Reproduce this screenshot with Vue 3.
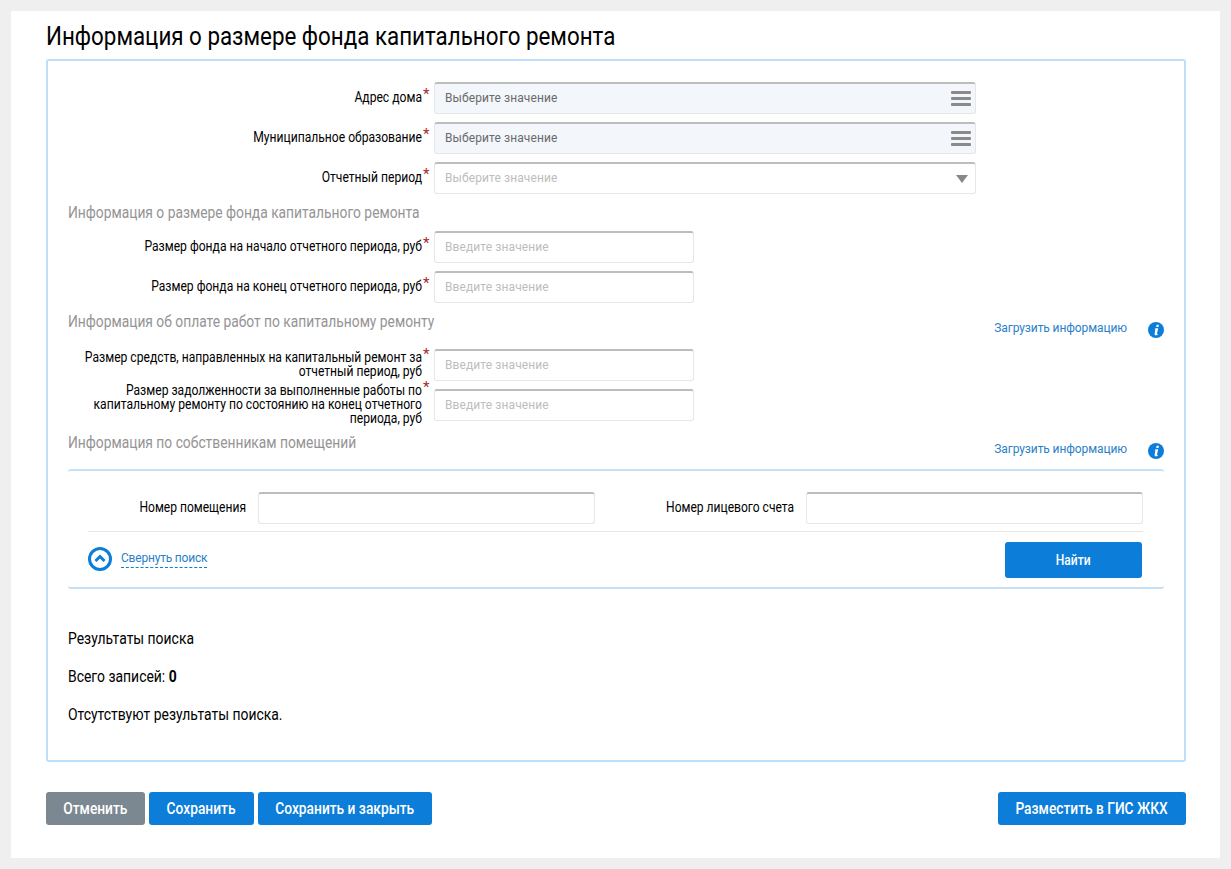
<template>
  <div class="page">
    <h1 class="title">Информация о размере фонда капитального ремонта</h1>

    <div class="box">
      <!-- Основные поля -->
      <div class="row" v-for="f in mainFields" :key="f.label">
        <div class="lbl-wrap"><label class="lbl">{{ f.label }}</label><span class="req">*</span></div>
        <div class="ctl wide" :class="{ picked: f.type === 'list' }">
          <span class="ctl-text" :class="{ dim: f.type !== 'list' }">Выберите значение</span>
          <svg v-if="f.type === 'list'" class="ico-list" width="20" height="15" viewBox="0 0 20 15">
            <rect y="0" width="20" height="3" rx="1" />
            <rect y="6" width="20" height="3" rx="1" />
            <rect y="12" width="20" height="3" rx="1" />
          </svg>
          <svg v-else class="ico-drop" width="12" height="8" viewBox="0 0 12 8"><path d="M0 0h12L6 8z" /></svg>
        </div>
      </div>

      <div class="section first"><h3>Информация о размере фонда капитального ремонта</h3></div>
      <div class="row" v-for="l in fundFields" :key="l">
        <div class="lbl-wrap"><label class="lbl">{{ l }}</label><span class="req">*</span></div>
        <input class="inp" placeholder="Введите значение" />
      </div>

      <div class="section second">
        <h3>Информация об оплате работ по капитальному ремонту</h3>
        <div class="load"><a>Загрузить информацию</a><svg class="info" width="16" height="16" viewBox="0 0 16 16"><circle cx="8" cy="8" r="8" /><path d="M8.6 2.8h2.3l-.4 2.1H8.2zM7.6 6.2h2.6L9 11.4c-.1.5.1.6.8.4l-.2 1.1c-1.6.7-3.3.5-3-1.2l.8-4.5h-1z" fill="#fff" /></svg></div>
      </div>
      <div class="row" v-for="l in payFields" :key="l">
        <div class="lbl-wrap"><label class="lbl">{{ l }}</label><span class="req">*</span></div>
        <input class="inp" placeholder="Введите значение" />
      </div>

      <div class="section third">
        <h3>Информация по собственникам помещений</h3>
        <div class="load"><a>Загрузить информацию</a><svg class="info" width="16" height="16" viewBox="0 0 16 16"><circle cx="8" cy="8" r="8" /><path d="M8.6 2.8h2.3l-.4 2.1H8.2zM7.6 6.2h2.6L9 11.4c-.1.5.1.6.8.4l-.2 1.1c-1.6.7-3.3.5-3-1.2l.8-4.5h-1z" fill="#fff" /></svg></div>
      </div>

      <!-- Блок поиска -->
      <div class="search">
        <div class="search-fields">
          <div class="s-lbl"><label>Номер помещения</label></div>
          <input class="inp s-inp" />
          <div class="s-lbl second-lbl"><label>Номер лицевого счета</label></div>
          <input class="inp s-inp" />
        </div>
        <div class="search-foot">
          <div class="collapse">
            <svg width="24" height="24" viewBox="0 0 24 24" fill="none" stroke="#0c7dd9">
              <circle cx="12" cy="12" r="10.5" stroke-width="3" />
              <path d="M7.5 14l4.5-4.5 4.5 4.5" stroke-width="3" />
            </svg>
            <a class="dashed">Свернуть поиск</a>
          </div>
          <button class="btn find"><span>Найти</span></button>
        </div>
      </div>

      <div class="results">
        <p>Результаты поиска</p>
        <p>Всего записей: <b>0</b></p>
        <p>Отсутствуют результаты поиска.</p>
      </div>
    </div>

    <div class="actions">
      <button class="btn gray w-cancel"><span>Отменить</span></button>
      <button class="btn w-save"><span>Сохранить</span></button>
      <button class="btn w-close"><span>Сохранить и закрыть</span></button>
      <button class="btn w-place"><span>Разместить в ГИС ЖКХ</span></button>
    </div>
  </div>
</template>

<script setup>
const mainFields = [
  { label: 'Адрес дома', type: 'list' },
  { label: 'Муниципальное образование', type: 'list' },
  { label: 'Отчетный период', type: 'drop' },
]
const fundFields = [
  'Размер фонда на начало отчетного периода, руб',
  'Размер фонда на конец отчетного периода, руб',
]
const payFields = [
  'Размер средств, направленных на капитальный ремонт за отчетный период, руб',
  'Размер задолженности за выполненные работы по капитальному ремонту по состоянию на конец отчетного периода, руб',
]
</script>

<style>
html, body {
  background: #efefef;
}
</style>

<style scoped>
/* Roboto Condensed is not installed, so the narrow text is Roboto squeezed with scaleX */
.page {
  box-sizing: border-box;
  width: 1209px;
  height: 847px;
  margin: 11px 0 0 11px;
  padding: 0 34px 0 35px;
  background: #fff;
  font-family: Roboto, sans-serif;
  color: #000;
}
.title {
  margin: 0;
  height: 48px;
  font-size: 26px;
  line-height: 50px;
  font-weight: 400;
  white-space: nowrap;
  transform: scaleX(0.86);
  transform-origin: left;
}
.box {
  box-sizing: border-box;
  height: 703px;
  padding: 21px 20px 0;
  border: 2px solid #bddffa;
  border-radius: 3px;
}
.row {
  display: flex;
  align-items: center;
  height: 32px;
  margin-bottom: 8px;
}
.lbl-wrap {
  display: flex;
  flex: none;
  width: 366px;
  margin-bottom: 3px;
}
.lbl {
  width: 409px;
  margin-left: -55px;
  flex: none;
  font-size: 14px;
  line-height: 14px;
  text-align: right;
  transform: scaleX(0.865);
  transform-origin: right;
}
.req {
  width: 12px;
  flex: none;
  padding-left: 1px;
  margin-top: -3px;
  box-sizing: border-box;
  color: #a52a2a;
  font-size: 15px;
  line-height: 14px;
}
.ctl {
  box-sizing: border-box;
  display: flex;
  align-items: center;
  justify-content: space-between;
  height: 32px;
  padding: 0 7px 0 10px;
  border: 1px solid #e6e6e6;
  border-top: 2px solid #bdbdbd;
  border-radius: 3px;
  background: #fff;
}
.wide {
  width: 542px;
}
.picked {
  padding-right: 4px;
  background: #f3f6fb;
}
.ctl-text {
  font-size: 12px;
  letter-spacing: 0.1px;
  color: #6a6a6a;
  margin-top: -2px;
}
.ctl-text.dim {
  color: #bdbdbd;
}
.ico-list {
  fill: #8a8a8a;
}
.ico-drop {
  fill: #888;
}
.inp {
  box-sizing: border-box;
  width: 260px;
  height: 32px;
  padding: 0 10px 2px;
  border: 1px solid #e6e6e6;
  border-top: 2px solid #bdbdbd;
  border-radius: 3px;
  outline: none;
  background: #fff;
  font-family: Roboto, sans-serif;
  font-size: 12px;
  letter-spacing: 0.1px;
}
.inp::placeholder {
  color: #bdbdbd;
  opacity: 1;
}
.section {
  display: flex;
  justify-content: space-between;
}
.section h3 {
  margin: 0;
  padding-top: 1px;
  font-size: 16px;
  font-weight: 400;
  line-height: 20px;
  color: #949494;
  white-space: nowrap;
  transform: scaleX(0.863);
  transform-origin: left;
}
.section.first {
  height: 29px;
}
.section.second {
  height: 38px;
}
.section.third {
  height: 40px;
  padding-top: 3px;
  box-sizing: border-box;
}
.load {
  display: flex;
  align-items: flex-start;
  gap: 21px;
  padding: 9px 0 0;
}
.load a {
  font-size: 12px;
  letter-spacing: -0.1px;
  line-height: 16px;
  color: #2a7fc9;
}
.info {
  margin-top: 2px;
  fill: #0c7dd9;
}
.search {
  box-sizing: border-box;
  height: 120px;
  padding: 21px 21px 0 20px;
  border-top: 2px solid #c5e0f7;
  border-bottom: 2px solid #c5e0f7;
  border-radius: 3px;
}
.search-fields {
  display: flex;
  align-items: flex-start;
  height: 39px;
  border-bottom: 1px solid #e6e6e6;
}
.s-lbl {
  flex: none;
  width: 158px;
  margin-right: 12px;
  font-size: 14px;
  line-height: 31px;
  text-align: right;
  transform: scaleX(0.86);
  transform-origin: right;
}
.second-lbl {
  width: 199px;
}
.s-inp {
  width: 337px;
}
.search-foot {
  display: flex;
  justify-content: space-between;
  align-items: flex-start;
  padding: 10px 1px 0 0;
}
.collapse {
  display: flex;
  align-items: flex-start;
  gap: 9px;
  padding-top: 5px;
}
.dashed {
  margin-top: 2px;
  font-size: 12px;
  letter-spacing: -0.2px;
  line-height: 18px;
  color: #2a7fc9;
  border-bottom: 1px dashed #0c7dd9;
}
.btn {
  height: 33px;
  padding: 0 0 1px;
  border: none;
  border-radius: 3px;
  background: #0c7dd9;
  color: #fff;
  font-family: Roboto, sans-serif;
  font-size: 16px;
  font-weight: 500;
}
.btn span {
  display: inline-block;
  white-space: nowrap;
  transform: scaleX(0.86);
}
.find {
  width: 137px;
  height: 36px;
  font-size: 14px;
}
.results {
  padding-top: 40px;
  font-size: 16px;
  transform: scaleX(0.87);
  transform-origin: left;
}
.results p {
  margin: 0 0 18px;
  line-height: 20px;
}
.actions {
  display: flex;
  gap: 4px;
  margin-top: 30px;
}
.gray {
  background: #7b8791;
}
.w-cancel {
  width: 99px;
}
.w-save {
  width: 105px;
}
.w-close {
  width: 174px;
}
.w-place {
  width: 188px;
  margin-left: auto;
}
</style>
